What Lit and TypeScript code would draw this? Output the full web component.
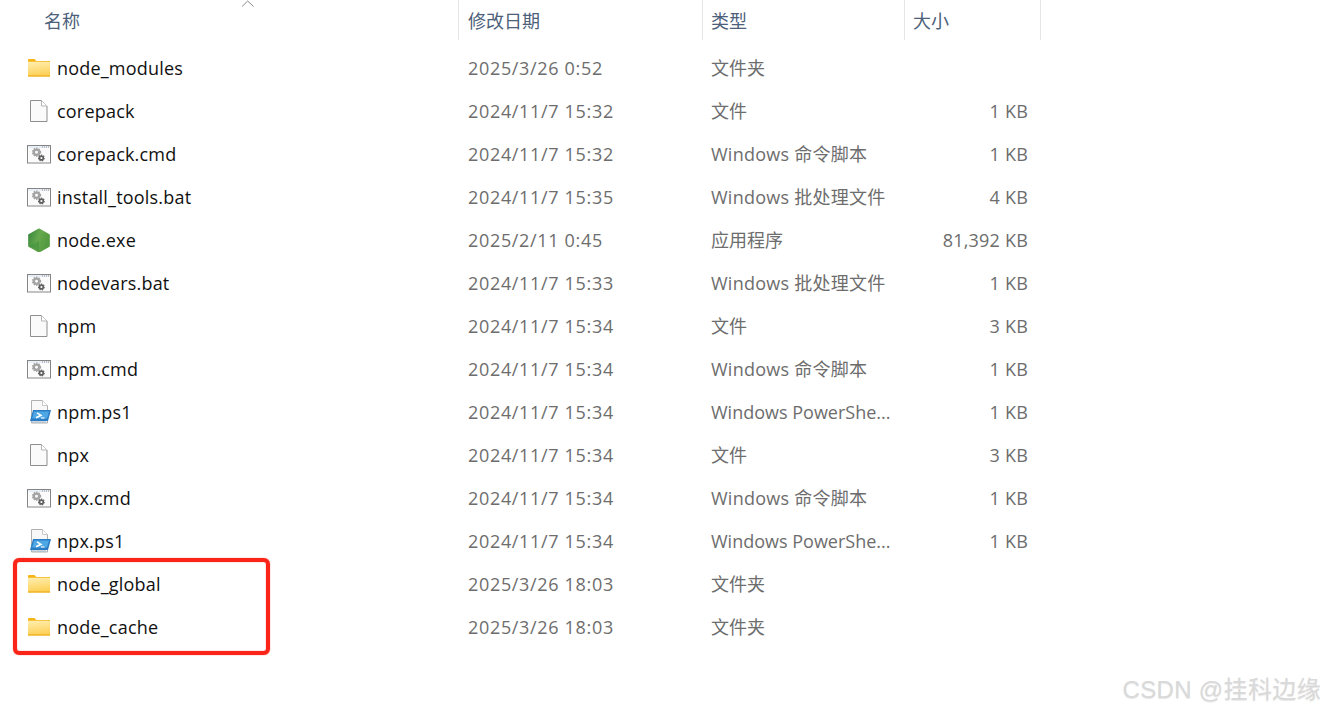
import { LitElement, html, css, svg } from "lit";
import { customElement } from "lit/decorators.js";

type Kind = "folder" | "file" | "cmd" | "node" | "ps";
const rows: [Kind, string, string, string, string][] = [
  ["folder", "node_modules", "2025/3/26 0:52", "文件夹", ""],
  ["file", "corepack", "2024/11/7 15:32", "文件", "1 KB"],
  ["cmd", "corepack.cmd", "2024/11/7 15:32", "Windows 命令脚本", "1 KB"],
  ["cmd", "install_tools.bat", "2024/11/7 15:35", "Windows 批处理文件", "4 KB"],
  ["node", "node.exe", "2025/2/11 0:45", "应用程序", "81,392 KB"],
  ["cmd", "nodevars.bat", "2024/11/7 15:33", "Windows 批处理文件", "1 KB"],
  ["file", "npm", "2024/11/7 15:34", "文件", "3 KB"],
  ["cmd", "npm.cmd", "2024/11/7 15:34", "Windows 命令脚本", "1 KB"],
  ["ps", "npm.ps1", "2024/11/7 15:34", "Windows PowerShe...", "1 KB"],
  ["file", "npx", "2024/11/7 15:34", "文件", "3 KB"],
  ["cmd", "npx.cmd", "2024/11/7 15:34", "Windows 命令脚本", "1 KB"],
  ["ps", "npx.ps1", "2024/11/7 15:34", "Windows PowerShe...", "1 KB"],
  ["folder", "node_global", "2025/3/26 18:03", "文件夹", ""],
  ["folder", "node_cache", "2025/3/26 18:03", "文件夹", ""],
];

const gear = (x: number, y: number, r: number, c: string) => svg`
  <circle cx=${x} cy=${y} r=${r} fill="none" stroke=${c} stroke-width=${r * 0.85} />
  <circle cx=${x} cy=${y} r=${r * 1.5} fill="none" stroke=${c} stroke-width=${r * 0.6} stroke-dasharray="1.4 1.1" />`;

function icon(kind: Kind) {
  switch (kind) {
    case "folder":
      return html`<svg width="24" height="24" viewBox="0 0 24 24">
        <defs>
          <linearGradient id="fg" x1="0" y1="0" x2="0.2" y2="1">
            <stop offset="0" stop-color="#ffeeb0" />
            <stop offset="1" stop-color="#fdd25c" />
          </linearGradient>
        </defs>
        <path d="M1 4q0-1 1-1h5.5l2 2.2H1z" fill="#f6b416" />
        <path d="M1 5h22v15.5H1z" fill="#f7c240" />
        <path d="M1 6h22v13.5H1z" fill="url(#fg)" />
        <path d="M1 19.5h22v1H1z" fill="#eeaa14" />
      </svg>`;
    case "file":
      return html`<svg width="24" height="24" viewBox="0 0 24 24">
        <path d="M3.5 1.5h11l5.5 5.5v15.5H3.5z" fill="#fafafa" stroke="#8f8f8f" />
        <path d="M14.5 1.5V7H20" fill="#fff" stroke="#b5b5b5" />
      </svg>`;
    case "cmd":
      return html`<svg width="24" height="24" viewBox="0 0 24 24">
        <rect x="0.5" y="3.5" width="23" height="17.5" fill="#fff" stroke="#858585" />
        <rect x="1" y="4" width="22" height="2" fill="#e9eff6" />
        <path d="M15 5h7" stroke="#8d8d8d" stroke-dasharray="1 1" />
        <rect x="2" y="6" width="20" height="14" fill="#fbfbfb" />
        ${gear(9.5, 10.2, 2.6, "#a3a3a3")}
        ${gear(14.4, 16, 1.9, "#5f5f5f")}
      </svg>`;
    case "node":
      return html`<svg width="24" height="24" viewBox="0 0 24 24">
        <defs>
          <linearGradient id="ng" x1="0" y1="0.1" x2="1" y2="0.5">
            <stop offset="0" stop-color="#38893c" />
            <stop offset="0.5" stop-color="#66a84d" />
            <stop offset="1" stop-color="#52993f" />
          </linearGradient>
        </defs>
        <path d="M12 1 22.2 6.8v11.4L12 24 1.8 18.2V6.8z" fill="url(#ng)" stroke="url(#ng)" stroke-linejoin="round" stroke-width="1.2" />
        <path d="M12 13 2.2 18 12 23.6z" fill="#3e9140" opacity=".55" />
      </svg>`;
    case "ps":
      return html`<svg width="24" height="24" viewBox="0 0 24 24">
        <path d="M4.5 .5h11l5 5v17.5h-16z" fill="#f8f8f8" stroke="#b0b0b0" />
        <path d="M15.5 .5v5h5" fill="#fff" stroke="#c8c8c8" />
        <path d="M6 10h18l-3 11H3z" fill="#2a7cc4" />
        <path d="M7 11.5h15l-2 7H5.2z" fill="#4fa8e6" />
        <path d="M10 12.8l4 2.5-5 2.4" fill="none" stroke="#fff" stroke-width="1.5" />
        <path d="M14 18h3.5" stroke="#fff" stroke-width="1.1" />
        <path d="M4 22h15" stroke="#9fb3c4" />
      </svg>`;
  }
}

@customElement("app-root")
export class AppRoot extends LitElement {
  static styles = css`
    :host {
      display: block;
      width: 1324px;
      height: 712px;
      background: #fff;
      overflow: hidden;
      position: relative;
      font-family: "Open Sans", "Noto Sans CJK SC", sans-serif;
      font-size: 18px;
    }
    .grid {
      display: grid;
      grid-template-columns: 459px 244px 202px 136px;
      width: 1041px;
    }
    .head {
      height: 40px;
      position: relative;
      color: #4c607a;
    }
    .head > div {
      border-right: 1px solid #e5e5e5;
      display: flex;
      align-items: center;
      box-sizing: border-box;
    }
    .grid > div:nth-child(2) {
      padding-left: 9px;
    }
    .grid > div:nth-child(3) {
      padding-left: 8px;
    }
    .head > div:nth-child(4) {
      padding-left: 8px;
    }
    .head > div:first-child {
      padding-left: 44px;
    }
    .caret {
      position: absolute;
      left: 241px;
      top: 0;
    }
    .rows {
      padding-top: 6px;
    }
    .row {
      height: 43px;
      align-items: center;
      color: #6d6d6d;
    }
    .row > div {
      white-space: nowrap;
    }
    .row > .name {
      display: flex;
      align-items: center;
      gap: 6px;
      padding-left: 27px;
      color: #111;
      letter-spacing: 0.2px;
    }
    .name svg {
      display: block;
      flex: none;
    }
    .row > .date {
      letter-spacing: 0.67px;
    }
    .row > .cjk {
      padding-bottom: 2px;
    }
    .row > .wide {
      letter-spacing: 0.25px;
    }
    .row > .size {
      padding-right: 13px;
      text-align: right;
      letter-spacing: 0.2px;
    }
    .mark {
      position: absolute;
      left: 13px;
      top: 558px;
      width: 257px;
      height: 97px;
      box-sizing: border-box;
      border: 4px solid #fa2419;
      border-radius: 6px;
      box-shadow: 0 0 1px #fa2419, inset 0 0 1px #fa2419;
    }
    .wm {
      position: absolute;
      right: 3px;
      top: 670px;
      font-size: 24px;
      letter-spacing: 0.35px;
      color: #d9d9d9;
      text-shadow: 0 1px 1px #e8e8e8;
      font-family: "Liberation Sans", "Noto Sans CJK SC", sans-serif;
      white-space: nowrap;
    }
  `;

  render() {
    return html`
      <div class="grid head">
        <div>名称</div>
        <div>修改日期</div>
        <div>类型</div>
        <div>大小</div>
        <svg class="caret" width="14" height="8" viewBox="0 0 14 8">
          <path d="M1 6.5 6.7 1l5.8 5.5" fill="none" stroke="#8a8a8a" stroke-width="1" />
        </svg>
      </div>
      <div class="rows">
        ${rows.map(([k, n, d, t, s]) => {
          const ps = t.endsWith("...");
          const win = t.startsWith("Windows") && !ps;
          return html`
            <div class="grid row">
              <div class="name">${icon(k)}<span>${n}</span></div>
              <div class="date">${d}</div>
              <div class="${ps ? "" : "cjk"} ${win ? "wide" : ""}">${t}</div>
              <div class="size">${s}</div>
            </div>
          `;
        })}
      </div>
      <div class="mark"></div>
      <div class="wm">CSDN @挂科边缘</div>
    `;
  }
}
